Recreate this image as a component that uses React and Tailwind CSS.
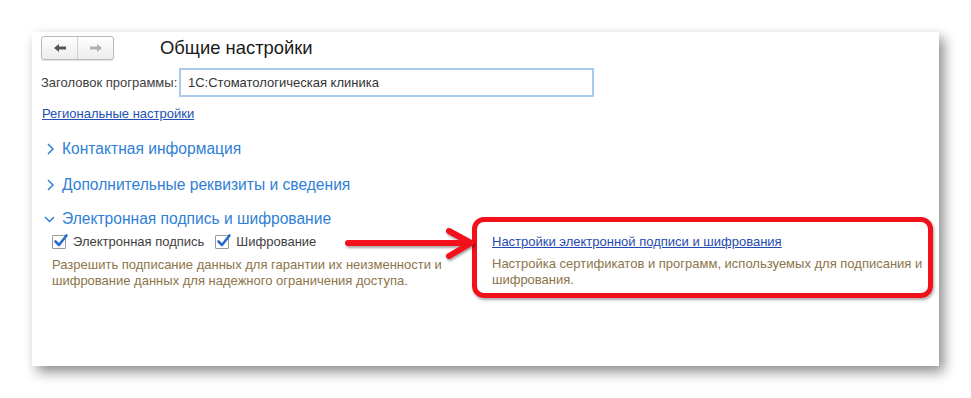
import React from 'react';

const font = { fontFamily: '"Liberation Sans", Arial, sans-serif' };

function NavArrow({ dir, color }) {
  return (
    <svg width="14" height="10" viewBox="0 0 14 10">
      {dir === 'left' ? (
        <path d="M1 5 L6 1 L6 3.5 L13 3.5 L13 6.5 L6 6.5 L6 9 Z" fill={color} />
      ) : (
        <path d="M13 5 L8 1 L8 3.5 L1 3.5 L1 6.5 L8 6.5 L8 9 Z" fill={color} />
      )}
    </svg>
  );
}

function Chevron({ open }) {
  return open ? (
    <svg width="11" height="7" viewBox="0 0 11 7" className="mr-[7px] -ml-[3px]">
      <path d="M1 1 L5.5 5.5 L10 1" fill="none" stroke="#2f7fd6" strokeWidth="1.5" />
    </svg>
  ) : (
    <svg width="7" height="12" viewBox="0 0 7 12" className="mr-[8px]">
      <path d="M1 1 L6 6 L1 11" fill="none" stroke="#2f7fd6" strokeWidth="1.5" />
    </svg>
  );
}

function Check({ label }) {
  return (
    <label className="flex items-center gap-[7px]">
      <span className="relative w-[14px] h-[14px] border border-[#9a9a9a] bg-white rounded-[1px]">
        <svg width="16" height="16" viewBox="0 0 16 16" className="absolute -top-[3px] left-0">
          <path d="M2.5 8.5 L6 12 L13.5 2.5" fill="none" stroke="#2a6bc9" strokeWidth="2.6" strokeLinecap="round" strokeLinejoin="round" />
        </svg>
      </span>
      <span className="text-[13px] text-[#404040]">{label}</span>
    </label>
  );
}

function Group({ title, open, children }) {
  return (
    <div>
      <div className="flex items-center h-[20px] pl-[6px]">
        <Chevron open={open} />
        <span className="text-[15.6px] text-[#2f7fd6]">{title}</span>
      </div>
      {children}
    </div>
  );
}

export default function App() {
  return (
    <div className="min-h-[398px] bg-white pt-8 pl-8" style={font}>
      <div className="relative w-[907px] h-[334px] bg-white shadow-[5px_6px_12px_rgba(0,0,0,0.45)] px-[9px] pt-[4px]">
        <div className="flex items-center">
          <div className="flex h-[24px] w-[73px] rounded-[3px] border border-[#b9b9b9] bg-gradient-to-b from-white to-[#ececec] shadow-[0_1px_1px_rgba(0,0,0,0.12)]">
            <div className="flex-1 flex items-center justify-center border-r border-[#d0d0d0]">
              <NavArrow dir="left" color="#555555" />
            </div>
            <div className="flex-1 flex items-center justify-center">
              <NavArrow dir="right" color="#b0b0b0" />
            </div>
          </div>
          <h1 className="ml-[46px] text-[18.4px] text-[#1a1a1a] leading-none">Общие настройки</h1>
        </div>

        <div className="flex items-center mt-[8px]">
          <span className="text-[13px] text-[#404040] w-[138px]">Заголовок программы:</span>
          <div className="w-[415px] h-[29px] border-2 border-[#a9c9ef] flex items-center pl-[7px] text-[13px] text-[#333333]">
            1С:Стоматологическая клиника
          </div>
        </div>

        <div className="mt-[4px] pl-[1px]">
          <a className="text-[13px] text-[#2150b4] underline leading-[15px]">Региональные настройки</a>
        </div>

        <div className="mt-[14px] flex flex-col gap-[16px]">
          <Group title="Контактная информация" />
          <Group title="Дополнительные реквизиты и сведения" />
          <div className="-mt-[2px]">
            <Group title="Электронная подпись и шифрование" open>
              <div className="flex mt-[5px] pl-[11px]">
                <div className="w-[440px]">
                  <div className="flex items-center gap-[11px] h-[16px]">
                    <Check label="Электронная подпись" />
                    <Check label="Шифрование" />
                  </div>
                  <p className="mt-[7px] text-[13px] leading-[16px] text-[#8d7449]">
                    Разрешить подписание данных для гарантии их неизменности и
                    <br />
                    шифрование данных для надежного ограничения доступа.
                  </p>
                </div>
                <div>
                  <a className="block text-[13px] leading-[16px] text-[#1f4bb0] underline">
                    Настройки электронной подписи и шифрования
                  </a>
                  <p className="mt-[6px] text-[13px] leading-[16px] text-[#8d7449]">
                    Настройка сертификатов и программ, используемых для подписания и
                    <br />
                    шифрования.
                  </p>
                </div>
              </div>
            </Group>
          </div>
        </div>

        <div className="absolute left-[440px] top-[185px] w-[461px] h-[81px] border-[5px] border-[#f2101a] rounded-[12px] shadow-[1px_2px_3px_rgba(0,0,0,0.35)]" />

        <svg width="134" height="34" viewBox="0 0 134 34" className="absolute left-[311px] top-[195px] drop-shadow-[1px_2px_1px_rgba(0,0,0,0.35)]">
          <path d="M5 16 L126 16" stroke="#f2101a" strokeWidth="6" strokeLinecap="round" />
          <path d="M106 4 L128 16 L106 29" fill="none" stroke="#f2101a" strokeWidth="6" strokeLinecap="round" strokeLinejoin="round" />
        </svg>
      </div>
    </div>
  );
}
